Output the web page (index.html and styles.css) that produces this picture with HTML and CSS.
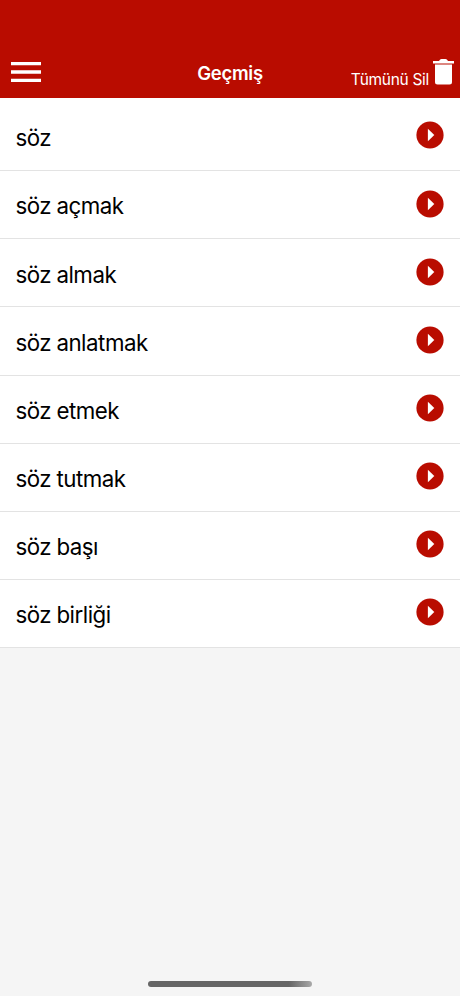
FILE: index.html
```html
<!DOCTYPE html>
<html lang="tr">
<head>
<meta charset="utf-8">
<title>Geçmiş</title>
<link rel="stylesheet" href="styles.css">
</head>
<body>
<svg class="defs" width="0" height="0"><defs><symbol id="play" viewBox="0 0 28 28"><circle cx="14" cy="14" r="13.6" fill="#b90c00"/><path d="M11.9 7.8v12.4l6.4-6.2z" fill="#fff"/></symbol></defs></svg>
<header class="bar">
<svg class="menu" viewBox="0 0 30 20"><path d="M0 0h30v3.3H0zM0 8.35h30v3.3H0zM0 16.7h30V20H0z" fill="#fff"/></svg>
<h1 class="title">Geçmiş</h1>
<div class="clear"><span class="label">Tümünü Sil</span>
<svg class="trash" viewBox="0 0 21 26"><path d="M2 5.600h17v17.400q0 2.500-2.500 2.500h-12Q2 25.500 2 23zM0 2h6Q7 0 8.500 0h4Q14 0 15 2h6v2.500H0z" fill="#fff"/></svg></div>
</header>
<ul class="list">
<li class="row"><span>söz</span><svg class="play"><use href="#play"/></svg></li>
<li class="row"><span>söz açmak</span><svg class="play"><use href="#play"/></svg></li>
<li class="row"><span>söz almak</span><svg class="play"><use href="#play"/></svg></li>
<li class="row"><span>söz anlatmak</span><svg class="play"><use href="#play"/></svg></li>
<li class="row"><span>söz etmek</span><svg class="play"><use href="#play"/></svg></li>
<li class="row"><span>söz tutmak</span><svg class="play"><use href="#play"/></svg></li>
<li class="row"><span>söz başı</span><svg class="play"><use href="#play"/></svg></li>
<li class="row"><span>söz birliği</span><svg class="play"><use href="#play"/></svg></li>
</ul>
<div class="home"></div>
</body>
</html>
```
FILE: styles.css
```css
* { box-sizing: border-box; }
body { margin: 0; height: 996px; display: flex; flex-direction: column; background: #f5f5f5; font-family: Inter, sans-serif; color: #000; overflow: hidden; }
.defs { position: absolute; }
.bar { height: 98px; flex: none; background: #b90c00; color: #fff; display: grid; grid-template-columns: 1fr auto 1fr; align-items: start; padding: 0 6px 0 11px; }
.menu { width: 30px; height: 20px; margin-top: 62px; }
.title { margin: 61px 5px 0 0; font-size: 18.5px; line-height: 24px; font-weight: 600; letter-spacing: -0.25px; }
.clear { display: flex; justify-content: flex-end; gap: 4px; margin-top: 59px; }
.label { font-size: 15.5px; line-height: 20px; margin-top: 10.5px; letter-spacing: -0.3px; white-space: nowrap; }
.trash { width: 21px; height: 26px; }
.list { margin: 0; padding: 5px 0 0; list-style: none; background: #fff; }
.row { height: 68.13px; padding: 3px 16px 0 15.5px; display: flex; justify-content: space-between; align-items: flex-start; border-bottom: 1px solid #e3e3e3; font-size: 22.3px; letter-spacing: -0.48px; word-spacing: -0.6px; }
.row span { line-height: 30px; margin-top: 17.3px; }
.play { width: 28px; height: 28px; margin-top: 15.4px; }
.home { width: 164px; height: 6px; border-radius: 3px; background: linear-gradient(90deg, #666 86%, #999 97%, #aaa); margin: auto auto 9px; }
```
